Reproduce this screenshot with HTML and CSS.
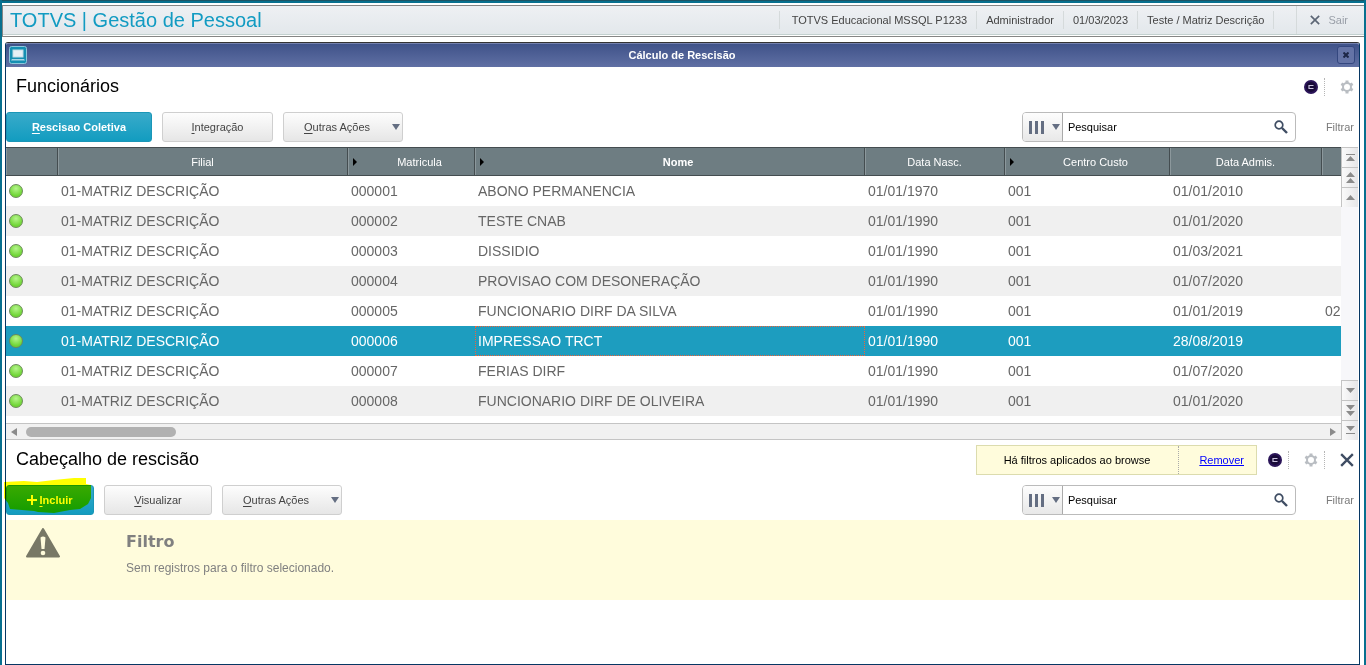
FILE: index.html
```
<!DOCTYPE html>
<html lang="pt-BR">
<head>
    <meta charset="UTF-8">
    <meta name="viewport" content="width=device-width, initial-scale=1.0">
    <title>TOTVS | Gestão de Pessoal</title>
    <link rel="stylesheet" href="styles.css">
</head>
<body>
<svg class="sprite" width="0" height="0" aria-hidden="true">
    <symbol id="gear" viewBox="0 0 14 14">
        <circle cx="7" cy="7" r="4" fill="none" stroke="currentColor" stroke-width="2"/>
        <g fill="currentColor">
            <rect id="tooth" x="5.5" y="0.5" width="3" height="2.5"/>
            <use href="#tooth" transform="rotate(60 7 7)"/>
            <use href="#tooth" transform="rotate(120 7 7)"/>
            <use href="#tooth" transform="rotate(180 7 7)"/>
            <use href="#tooth" transform="rotate(240 7 7)"/>
            <use href="#tooth" transform="rotate(300 7 7)"/>
        </g>
    </symbol>
    <symbol id="orb" viewBox="0 0 14 14">
        <circle cx="7" cy="7" r="7" fill="#2a1458"/>
        <circle cx="7" cy="7" r="5" fill="#180a38"/>
        <path d="M9.5 5.5H5v3h4.500" fill="none" stroke="#c9c2dd" stroke-width="1.2"/>
    </symbol>
    <symbol id="search" viewBox="0 0 14 14">
        <circle cx="5" cy="5" r="3.8" fill="none" stroke="#3f4d63" stroke-width="1.7"/>
        <path d="M8 8l5 5" stroke="#3f4d63" stroke-width="2.4"/>
    </symbol>
    <symbol id="columns" viewBox="0 0 15 13">
        <path d="M0 0h3v13H0zM6 0h3v13H6zM12 0h3v13h-3z" fill="#646e82"/>
    </symbol>
    <symbol id="close" viewBox="0 0 12 12">
        <path d="M1 1l10 10M11 1L1 11" stroke="currentColor" stroke-width="2"/>
    </symbol>
    <symbol id="close-bold" viewBox="0 0 12 12">
        <path d="M1 1l10 10M11 1L1 11" stroke="currentColor" stroke-width="4"/>
    </symbol>
</svg>

<div class="strip"></div>
<header class="topbar">
    <h1>TOTVS | Gestão de Pessoal</h1>
    <ul class="session">
        <li class="env">TOTVS Educacional MSSQL P1233</li>
        <li>Administrador</li>
        <li>01/03/2023</li>
        <li>Teste / Matriz Descrição</li>
        <li class="blank"></li>
        <li class="exit"><button type="button"><svg width="10" height="10"><use href="#close"/></svg>Sair</button></li>
    </ul>
</header>

<main class="window">
    <div class="titlebar">
        <svg class="app-icon" width="18" height="18" viewBox="0 0 18 18">
            <rect x="0.5" y="0.5" width="17" height="17" rx="2" fill="#158fb2" stroke="#8cc7dc"/>
            <rect x="4" y="4" width="10" height="7" fill="#e6f0f5" stroke="#bfdde8"/>
            <path d="M3 13h12l1 1.5H2z" fill="#a9d6e6"/>
        </svg>
        <h2>Cálculo de Rescisão</h2>
        <button type="button" class="win-close" aria-label="Fechar"><svg width="6" height="6"><use href="#close-bold"/></svg></button>
    </div>

    <section>
        <div class="section-head">
            <h3>Funcionários</h3>
            <div class="tools">
                <svg width="14" height="14"><use href="#orb"/></svg>
                <span class="dots"></span>
                <svg class="gear" width="14" height="14"><use href="#gear"/></svg>
            </div>
        </div>
        <div class="toolbar">
            <button type="button" class="btn primary wide"><span><u>R</u>escisao Coletiva</span></button>
            <button type="button" class="btn medium"><span><u>I</u>ntegração</span></button>
            <button type="button" class="btn menu"><span><u>O</u>utras Ações</span><i class="caret"></i></button>
            <form class="search">
                <button type="button" class="cols" aria-label="Colunas"><svg width="15" height="13"><use href="#columns"/></svg><i class="caret"></i></button>
                <input type="text" value="Pesquisar" aria-label="Pesquisar funcionários">
                <button type="button" class="go" aria-label="Buscar"><svg width="14" height="14"><use href="#search"/></svg></button>
            </form>
            <button type="button" class="filter">Filtrar</button>
        </div>

        <div class="browse">
            <div class="grid">
                <div class="grid-view">
                    <table>
                        <colgroup>
                            <col class="c-status"><col class="c-filial"><col class="c-mat"><col class="c-nome">
                            <col class="c-nasc"><col class="c-custo"><col class="c-admis"><col class="c-more">
                        </colgroup>
                        <thead>
                            <tr>
                                <th></th>
                                <th>Filial</th>
                                <th class="sort">Matricula</th>
                                <th class="sort strong">Nome</th>
                                <th>Data Nasc.</th>
                                <th class="sort">Centro Custo</th>
                                <th>Data Admis.</th>
                                <th></th>
                            </tr>
                        </thead>
                        <tbody>
                            <tr><td><i class="led"></i></td><td>01-MATRIZ DESCRIÇÃO</td><td>000001</td><td>ABONO PERMANENCIA</td><td>01/01/1970</td><td>001</td><td>01/01/2010</td><td></td></tr>
                            <tr><td><i class="led"></i></td><td>01-MATRIZ DESCRIÇÃO</td><td>000002</td><td>TESTE CNAB</td><td>01/01/1990</td><td>001</td><td>01/01/2020</td><td></td></tr>
                            <tr><td><i class="led"></i></td><td>01-MATRIZ DESCRIÇÃO</td><td>000003</td><td>DISSIDIO</td><td>01/01/1990</td><td>001</td><td>01/03/2021</td><td></td></tr>
                            <tr><td><i class="led"></i></td><td>01-MATRIZ DESCRIÇÃO</td><td>000004</td><td>PROVISAO COM DESONERAÇÃO</td><td>01/01/1990</td><td>001</td><td>01/07/2020</td><td></td></tr>
                            <tr><td><i class="led"></i></td><td>01-MATRIZ DESCRIÇÃO</td><td>000005</td><td>FUNCIONARIO DIRF DA SILVA</td><td>01/01/1990</td><td>001</td><td>01/01/2019</td><td>02</td></tr>
                            <tr class="selected"><td><i class="led"></i></td><td>01-MATRIZ DESCRIÇÃO</td><td>000006</td><td class="focus">IMPRESSAO TRCT</td><td>01/01/1990</td><td>001</td><td>28/08/2019</td><td></td></tr>
                            <tr><td><i class="led"></i></td><td>01-MATRIZ DESCRIÇÃO</td><td>000007</td><td>FERIAS DIRF</td><td>01/01/1990</td><td>001</td><td>01/07/2020</td><td></td></tr>
                            <tr><td><i class="led"></i></td><td>01-MATRIZ DESCRIÇÃO</td><td>000008</td><td>FUNCIONARIO DIRF DE OLIVEIRA</td><td>01/01/1990</td><td>001</td><td>01/01/2020</td><td></td></tr>
                        </tbody>
                    </table>
                </div>
                <div class="hscroll">
                    <svg width="6" height="8"><path d="M6 0v8L0 4z"/></svg>
                    <div class="thumb"></div>
                    <svg width="6" height="8"><path d="M0 0v8l6-4z"/></svg>
                </div>
            </div>
            <div class="vscroll">
                <button type="button" aria-label="Início"><svg width="9" height="9"><path d="M0 1h9v1H0zM0 8h9L4.5 3z"/></svg></button>
                <button type="button" aria-label="Página anterior"><svg width="9" height="12"><path d="M0 5h9L4.5 0zM0 11h9L4.5 6z"/></svg></button>
                <button type="button" aria-label="Linha anterior"><svg width="9" height="5"><path d="M0 5h9L4.5 0z"/></svg></button>
                <div class="track"></div>
                <button type="button" aria-label="Próxima linha"><svg width="9" height="5"><path d="M0 0h9L4.5 5z"/></svg></button>
                <button type="button" aria-label="Próxima página"><svg width="9" height="12"><path d="M0 0h9L4.5 5zM0 6h9L4.5 11z"/></svg></button>
                <button type="button" aria-label="Fim"><svg width="9" height="9"><path d="M0 0h9L4.5 5zM0 7h9v1H0z"/></svg></button>
            </div>
        </div>
    </section>

    <section>
        <div class="section-head">
            <h3>Cabeçalho de rescisão</h3>
            <div class="applied">
                <span>Há filtros aplicados ao browse</span>
                <a href="#">Remover</a>
            </div>
            <div class="tools">
                <svg width="14" height="14"><use href="#orb"/></svg>
                <span class="dots"></span>
                <svg class="gear" width="14" height="14"><use href="#gear"/></svg>
                <span class="dots"></span>
                <svg class="close" width="14" height="14"><use href="#close"/></svg>
            </div>
        </div>
        <div class="toolbar lower">
            <button type="button" class="btn primary add">
                <svg width="10" height="10" viewBox="0 0 10 10"><path d="M5 0v10M0 5h10" stroke="#fff" stroke-width="2"/></svg>
                <span><u>I</u>ncluir</span>
                <svg class="marker" width="90" height="38" viewBox="0 0 90 38"><path d="M0 4L20 3L33 4L50 2L70 0H82V6L87 7V20L84 26L76 31L66 32L50 35L34 34L30 33L6 31L4 25L0 20z" fill="#ff0"/></svg>
            </button>
            <button type="button" class="btn medium"><span><u>V</u>isualizar</span></button>
            <button type="button" class="btn menu"><span><u>O</u>utras Ações</span><i class="caret"></i></button>
            <form class="search">
                <button type="button" class="cols" aria-label="Colunas"><svg width="15" height="13"><use href="#columns"/></svg><i class="caret"></i></button>
                <input type="text" value="Pesquisar" aria-label="Pesquisar rescisões">
                <button type="button" class="go" aria-label="Buscar"><svg width="14" height="14"><use href="#search"/></svg></button>
            </form>
            <button type="button" class="filter">Filtrar</button>
        </div>
        <div class="notice">
            <svg width="34" height="30" viewBox="0 0 34 30">
                <path d="M17 1L33 28.5H1z" fill="#787866" stroke="#787866" stroke-width="2" stroke-linejoin="round"/>
                <path d="M14.5 9.5q2.500-2 5 0L18.5 21h-3z" fill="#fffcdc"/>
                <circle cx="17" cy="25" r="2.300" fill="#fffcdc"/>
            </svg>
            <div>
                <h4>Filtro</h4>
                <p>Sem registros para o filtro selecionado.</p>
            </div>
        </div>
    </section>
</main>
</body>
</html>
```

FILE: styles.css
```
* {
    box-sizing: border-box;
    margin: 0;
    padding: 0;
}

body {
    display: flex;
    flex-direction: column;
    min-height: 100vh;
    font-family: "Liberation Sans", Arial, sans-serif;
    font-size: 11px;
    color: #444;
    background: #fff;
    border: solid #08708f;
    border-width: 0 2px;
}

svg {
    display: block;
    flex: none;
}

.sprite {
    position: absolute;
}

button {
    font: inherit;
    color: inherit;
    background: none;
    border: none;
    cursor: pointer;
}

.strip {
    height: 3px;
    margin-bottom: 2px;
    background: linear-gradient(#1d5464 1px, #08708f 1px);
}

/* top bar */
.topbar {
    display: flex;
    justify-content: space-between;
    height: 32px;
    background: linear-gradient(#eef0f3, #e2e7eb);
    border: 1px solid #858585;
    border-right: none;
    box-shadow: inset 0 -1px #fff, inset 0 -2px #c3d0cf;
}

.topbar h1 {
    padding-left: 7px;
    font-size: 20px;
    font-weight: normal;
    line-height: 28px;
    color: #129bc2;
}

.session {
    display: flex;
    align-items: center;
    list-style: none;
    padding-bottom: 2px;
}

.session li {
    height: 18px;
    padding: 0 9px;
    line-height: 18px;
    border-left: 1px solid #d5dadb;
}

.session .env {
    padding-left: 12px;
}

.session .blank {
    width: 23px;
}

.session .exit {
    height: 28px;
    padding: 0 16px 0 13px;
}

.exit button {
    display: flex;
    align-items: center;
    gap: 8px;
    height: 28px;
    color: #999fa8;
}

.exit svg {
    color: #5c6675;
}

/* window */
.window {
    flex: 1;
    margin: 5px 4px 0 3px;
    border: 1px solid #073763;
    border-top-color: #333;
    border-radius: 3px 3px 0 0;
}

.titlebar {
    display: flex;
    align-items: center;
    justify-content: space-between;
    height: 24px;
    padding: 0 4px 1px 3px;
    background: linear-gradient(#3f5289, #6070a4);
    border-top: 1px solid #7380ae;
    border-radius: 2px 2px 0 0;
}

.titlebar h2 {
    font-size: 11px;
    color: #fff;
}

.win-close {
    display: flex;
    align-items: center;
    justify-content: center;
    width: 18px;
    height: 18px;
    color: #1d2747;
    background: #6473a6;
    border: 1px solid #34477f;
    border-radius: 3px;
}

.section-head {
    display: flex;
    align-items: center;
    height: 40px;
    padding: 0 5px 0 10px;
}

.section-head h3 {
    flex: 1;
    padding-bottom: 2px;
    font-size: 18px;
    font-weight: normal;
    color: #000;
}

.tools {
    display: flex;
    align-items: center;
    gap: 6px;
}

.dots {
    height: 18px;
    margin-right: 9px;
    border-left: 1px dotted #b5b5b5;
}

.gear {
    color: #b9bdc2;
}

.close {
    color: #3f4d63;
}

.applied {
    display: flex;
    align-items: center;
    height: 30px;
    margin-right: 11px;
    color: #000;
    background: #fffcdc;
    border: 1px solid #dcdcae;
}

.applied span {
    padding: 0 28px 0 27px;
}

.applied a {
    padding: 0 12px 0 20px;
    line-height: 28px;
    color: #00f;
    border-left: 1px dotted #aaa;
}

/* toolbar */
.toolbar {
    display: flex;
    align-items: center;
    height: 40px;
    gap: 10px;
    padding-right: 5px;
}

.btn {
    display: flex;
    align-items: center;
    justify-content: center;
    height: 30px;
    border: 1px solid #cfcfcf;
    border-radius: 3px;
    background: linear-gradient(#fdfdfd, #e6e6e6);
}

.btn u {
    text-underline-offset: 2px;
}

.wide {
    width: 146px;
}

.medium {
    width: 111px;
}

.menu {
    width: 120px;
    padding-left: 20px;
    padding-right: 2px;
    justify-content: space-between;
}

.primary {
    font-weight: bold;
    color: #fff;
    background: linear-gradient(#39aaca, #129cc0);
    border-color: #1a96b7;
}

.add {
    position: relative;
    gap: 2px;
    width: 88px;
}

/* highlighter stroke over the button */
.marker {
    position: absolute;
    left: -3px;
    top: -8px;
    mix-blend-mode: multiply;
    pointer-events: none;
}

.toolbar.lower .medium {
    width: 108px;
}

.caret {
    border: solid transparent;
    border-width: 6px 4px 0;
    border-top-color: #646e82;
}

.search {
    display: flex;
    width: 274px;
    height: 30px;
    margin-left: auto;
    border: 1px solid #bbb;
    border-radius: 4px;
}

.cols {
    display: flex;
    align-items: center;
    justify-content: space-between;
    width: 40px;
    padding: 0 2px 0 6px;
    border-right: 1px solid #aaa;
    border-radius: 3px 0 0 3px;
    background: linear-gradient(#fdfdfd, #e8e8e8);
}

.search input {
    flex: 1;
    min-width: 0;
    padding-left: 5px;
    font: inherit;
    color: #000;
    background: none;
    border: none;
    outline: none;
}

.go {
    padding: 0 7px;
}

.filter {
    margin-left: 20px;
    color: #7b7b7b;
}

/* browse */
.browse {
    display: flex;
    padding-right: 1px;
}

.grid {
    flex: 1;
    min-width: 0;
}

.grid-view {
    height: 276px;
    overflow: hidden;
}

table {
    width: 1435px;
    table-layout: fixed;
    border-collapse: separate;
    border-spacing: 0;
}

.c-status { width: 52px; }
.c-filial { width: 290px; }
.c-mat { width: 127px; }
.c-nome { width: 390px; }
.c-nasc { width: 140px; }
.c-custo { width: 165px; }
.c-admis { width: 152px; }
.c-more { width: 119px; }

th {
    height: 29px;
    font-weight: normal;
    color: #fff;
    background: #6e7d82;
    border: solid #444d50;
    border-width: 1px 1px 1px 0;
    box-shadow: inset 1px 0 #8c989c;
}

th.strong {
    font-weight: bold;
}

th.sort::before {
    content: "";
    float: left;
    margin: 2px 8px 0 5px;
    border: solid transparent;
    border-width: 4px 0 4px 4px;
    border-left-color: #000;
}

td {
    height: 30px;
    padding-left: 3px;
    font-size: 14px;
    color: #666;
    white-space: nowrap;
}

tbody tr:nth-child(even) {
    background: #f0f0f0;
}

tbody tr.selected {
    background: #1d9dbf;
}

.selected td {
    color: #fff;
}

td.focus {
    padding-left: 2px;
    border: 1px dotted #f0623a;
}

.led {
    display: block;
    width: 14px;
    height: 14px;
    border: 1px solid #6d8a5c;
    border-radius: 50%;
    background: radial-gradient(circle at 50% 30%, #b6f58c, #6fd535 70%);
}

.hscroll {
    display: flex;
    align-items: center;
    height: 17px;
    padding: 0 5px;
    background: #f1f1f1;
    border: solid #c4c4c4;
    border-width: 1px 0;
}

.hscroll svg, .vscroll svg {
    fill: #8b8b8b;
}

.thumb {
    width: 150px;
    height: 10px;
    margin: 0 auto 0 9px;
    border-radius: 5px;
    background: #b1b1b1;
}

.vscroll {
    display: flex;
    flex-direction: column;
    width: 17px;
}

.vscroll button {
    display: flex;
    align-items: center;
    justify-content: center;
    height: 20px;
    background: linear-gradient(90deg, #fafafa, #e6e6e8);
    border: solid #c4c4c4;
    border-width: 1px 0 0 1px;
}

.track {
    flex: 1;
    background: #f7f7fa;
}

.notice {
    display: flex;
    gap: 66px;
    height: 80px;
    margin-right: 1px;
    padding: 8px 20px;
    color: #808080;
    background: #fffcdc;
}

.notice h4 {
    font-family: "DejaVu Sans", Verdana, sans-serif;
    font-size: 16px;
    line-height: 28px;
}

.notice p {
    font-size: 12px;
    line-height: 24px;
}
```
